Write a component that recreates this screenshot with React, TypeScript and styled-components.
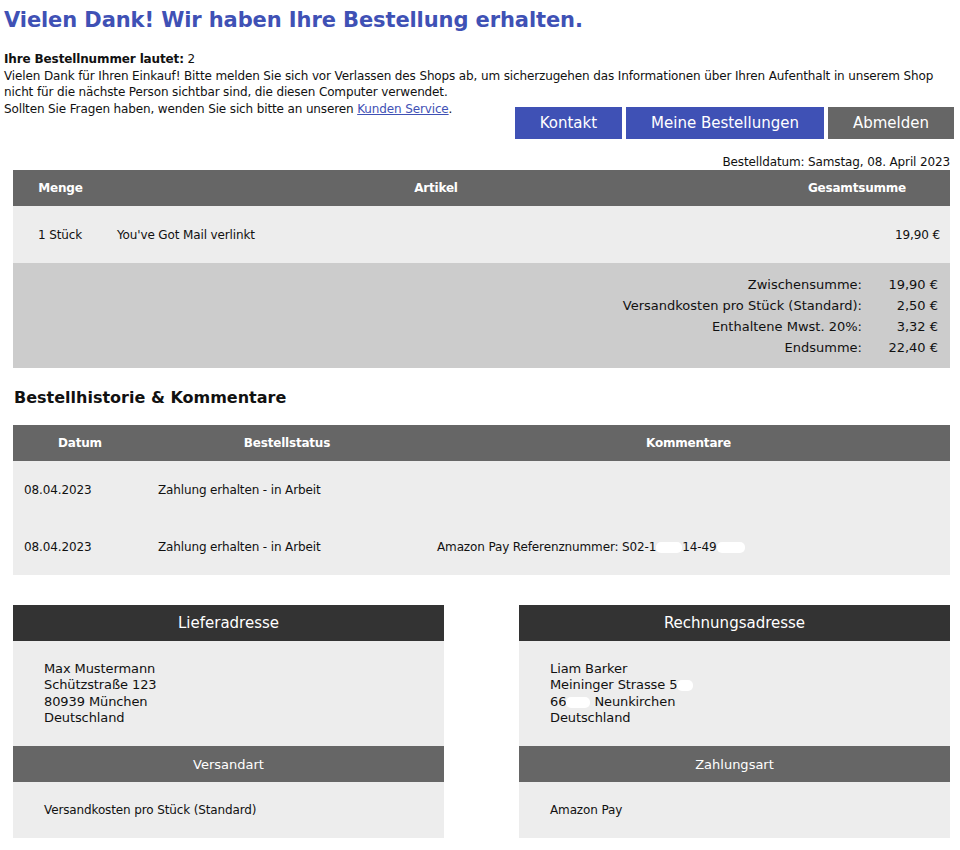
import React from "react";
import styled, { createGlobalStyle } from "styled-components";

const Global = createGlobalStyle`
  html, body { margin: 0; padding: 0; background: #fff; }
  body { font-family: "DejaVu Sans", Verdana, sans-serif; color: #111; }
`;

const Page = styled.div`
  width: 950px;
  padding: 0 6px 12px 4px;
`;

const Title = styled.h1`
  margin: 0;
  padding-top: 7px;
  font-size: 21px;
  line-height: 26px;
  font-weight: bold;
  letter-spacing: -0.1px;
  color: #3f51b5;
`;

const Intro = styled.div`
  margin-top: 18px;
  font-size: 12px;
  line-height: 16.7px;
  letter-spacing: -0.13px;
`;

const Line = styled.div``;

const Bold = styled.span`
  font-weight: bold;
`;

const Link = styled.a`
  color: #3f51b5;
  text-decoration: underline;
`;

const ActionRow = styled.div`
  display: flex;
  justify-content: space-between;
  align-items: flex-start;
`;

const Buttons = styled.div`
  display: flex;
  gap: 4px;
  margin-top: 6px;
  letter-spacing: 0;
`;

const Button = styled.button<{ $grey?: boolean }>`
  height: 32px;
  padding: 0 25px;
  border: none;
  background: ${(p) => (p.$grey ? "#666666" : "#3f51b5")};
  color: #fff;
  font-family: "DejaVu Sans", Verdana, sans-serif;
  font-size: 15px;
`;

const DateLine = styled.div`
  margin-top: 16px;
  padding-right: 4px;
  text-align: right;
  font-size: 12px;
  line-height: 15px;
  letter-spacing: -0.13px;
`;

const Table = styled.div`
  margin: 0 4px 0 9px;
`;

const HeadRow = styled.div<{ $cols: string }>`
  display: grid;
  grid-template-columns: ${(p) => p.$cols};
  height: 36px;
  align-items: center;
  background: #666666;
  color: #fff;
  font-family: Tahoma, "DejaVu Sans", sans-serif;
  font-weight: bold;
  font-size: 12px;
  letter-spacing: -0.2px;
`;

const HeadCell = styled.div`
  text-align: center;
`;

const BodyRow = styled.div<{ $cols: string }>`
  display: grid;
  grid-template-columns: ${(p) => p.$cols};
  height: 57px;
  align-items: center;
  background: #ededed;
  font-size: 12px;
  letter-spacing: -0.13px;
`;

const Cell = styled.div<{ $pad?: number; $right?: boolean }>`
  padding-left: ${(p) => p.$pad ?? 0}px;
  padding-right: ${(p) => (p.$right ? 10 : 0)}px;
  text-align: ${(p) => (p.$right ? "right" : "left")};
  white-space: nowrap;
`;

const Totals = styled.div`
  background: #cccccc;
  padding: 11px 12px 10px 0;
  display: grid;
  grid-template-columns: 1fr 76px;
  font-size: 13px;
  line-height: 21px;
  text-align: right;
`;

const TotalLabel = styled.div``;

const TotalValue = styled.div``;

const SectionTitle = styled.h2`
  margin: 19px 0 0 10px;
  font-size: 16px;
  line-height: 22px;
  font-weight: bold;
  color: #111;
`;

const HistoryTable = styled(Table)`
  margin-top: 16px;
`;

const Boxes = styled.div`
  margin: 30px 4px 0 9px;
  display: grid;
  grid-template-columns: 431px 431px;
  justify-content: space-between;
`;

const Box = styled.div``;

const BoxHead = styled.div<{ $dark?: boolean }>`
  height: 36px;
  display: flex;
  align-items: center;
  justify-content: center;
  background: ${(p) => (p.$dark ? "#333333" : "#666666")};
  color: #fff;
  font-size: ${(p) => (p.$dark ? "15px" : "13px")};
`;

const BoxBody = styled.div<{ $tall?: boolean }>`
  background: #ededed;
  height: ${(p) => (p.$tall ? "105px" : "56px")};
  padding-left: 31px;
  display: flex;
  flex-direction: column;
  justify-content: center;
  font-size: ${(p) => (p.$tall ? "13px" : "12px")};
  letter-spacing: ${(p) => (p.$tall ? "-0.1px" : "-0.13px")};
  line-height: 16.3px;
`;

const Redact = styled.span<{ $w: number }>`
  display: inline-block;
  width: ${(p) => p.$w}px;
  height: 11px;
  background: #fff;
  border-radius: 5px;
  vertical-align: middle;
`;

const COLS1 = "95px 1fr 186px";
const COLS2 = "134px 280px 1fr";

export default function App() {
  return (
    <Page>
      <Global />
      <Title>Vielen Dank! Wir haben Ihre Bestellung erhalten.</Title>
      <Intro>
        <Line>
          <Bold>Ihre Bestellnummer lautet:</Bold> 2
        </Line>
        <Line>
          Vielen Dank für Ihren Einkauf! Bitte melden Sie sich vor Verlassen des Shops ab, um sicherzugehen das Informationen über Ihren Aufenthalt in unserem Shop nicht für die nächste Person sichtbar sind, die diesen Computer verwendet.
        </Line>
        <ActionRow>
          <Line>
            Sollten Sie Fragen haben, wenden Sie sich bitte an unseren <Link href="#">Kunden Service</Link>.
          </Line>
          <Buttons>
            <Button>Kontakt</Button>
            <Button>Meine Bestellungen</Button>
            <Button $grey>Abmelden</Button>
          </Buttons>
        </ActionRow>
      </Intro>
      <DateLine>Bestelldatum: Samstag, 08. April 2023</DateLine>
      <Table>
        <HeadRow $cols={COLS1}>
          <HeadCell>Menge</HeadCell>
          <HeadCell>Artikel</HeadCell>
          <HeadCell>Gesamtsumme</HeadCell>
        </HeadRow>
        <BodyRow $cols={COLS1}>
          <Cell $pad={25}>1 Stück</Cell>
          <Cell $pad={9}>You've Got Mail verlinkt</Cell>
          <Cell $right>19,90 €</Cell>
        </BodyRow>
        <Totals>
          <TotalLabel>Zwischensumme:</TotalLabel>
          <TotalValue>19,90 €</TotalValue>
          <TotalLabel>Versandkosten pro Stück (Standard):</TotalLabel>
          <TotalValue>2,50 €</TotalValue>
          <TotalLabel>Enthaltene Mwst. 20%:</TotalLabel>
          <TotalValue>3,32 €</TotalValue>
          <TotalLabel>Endsumme:</TotalLabel>
          <TotalValue>22,40 €</TotalValue>
        </Totals>
      </Table>
      <SectionTitle>Bestellhistorie &amp; Kommentare</SectionTitle>
      <HistoryTable>
        <HeadRow $cols={COLS2}>
          <HeadCell>Datum</HeadCell>
          <HeadCell>Bestellstatus</HeadCell>
          <HeadCell>Kommentare</HeadCell>
        </HeadRow>
        <BodyRow $cols={COLS2}>
          <Cell $pad={11}>08.04.2023</Cell>
          <Cell $pad={11}>Zahlung erhalten - in Arbeit</Cell>
          <Cell $pad={10}></Cell>
        </BodyRow>
        <BodyRow $cols={COLS2}>
          <Cell $pad={11}>08.04.2023</Cell>
          <Cell $pad={11}>Zahlung erhalten - in Arbeit</Cell>
          <Cell $pad={10}>
            Amazon Pay Referenznummer: S02-1<Redact $w={26} />14-49<Redact $w={28} />
          </Cell>
        </BodyRow>
      </HistoryTable>
      <Boxes>
        <Box>
          <BoxHead $dark>Lieferadresse</BoxHead>
          <BoxBody $tall>
            <Line>Max Mustermann</Line>
            <Line>Schützstraße 123</Line>
            <Line>80939 München</Line>
            <Line>Deutschland</Line>
          </BoxBody>
          <BoxHead>Versandart</BoxHead>
          <BoxBody>Versandkosten pro Stück (Standard)</BoxBody>
        </Box>
        <Box>
          <BoxHead $dark>Rechnungsadresse</BoxHead>
          <BoxBody $tall>
            <Line>Liam Barker</Line>
            <Line>Meininger Strasse 5<Redact $w={16} /></Line>
            <Line>
              66<Redact $w={24} /> Neunkirchen
            </Line>
            <Line>Deutschland</Line>
          </BoxBody>
          <BoxHead>Zahlungsart</BoxHead>
          <BoxBody>Amazon Pay</BoxBody>
        </Box>
      </Boxes>
    </Page>
  );
}
